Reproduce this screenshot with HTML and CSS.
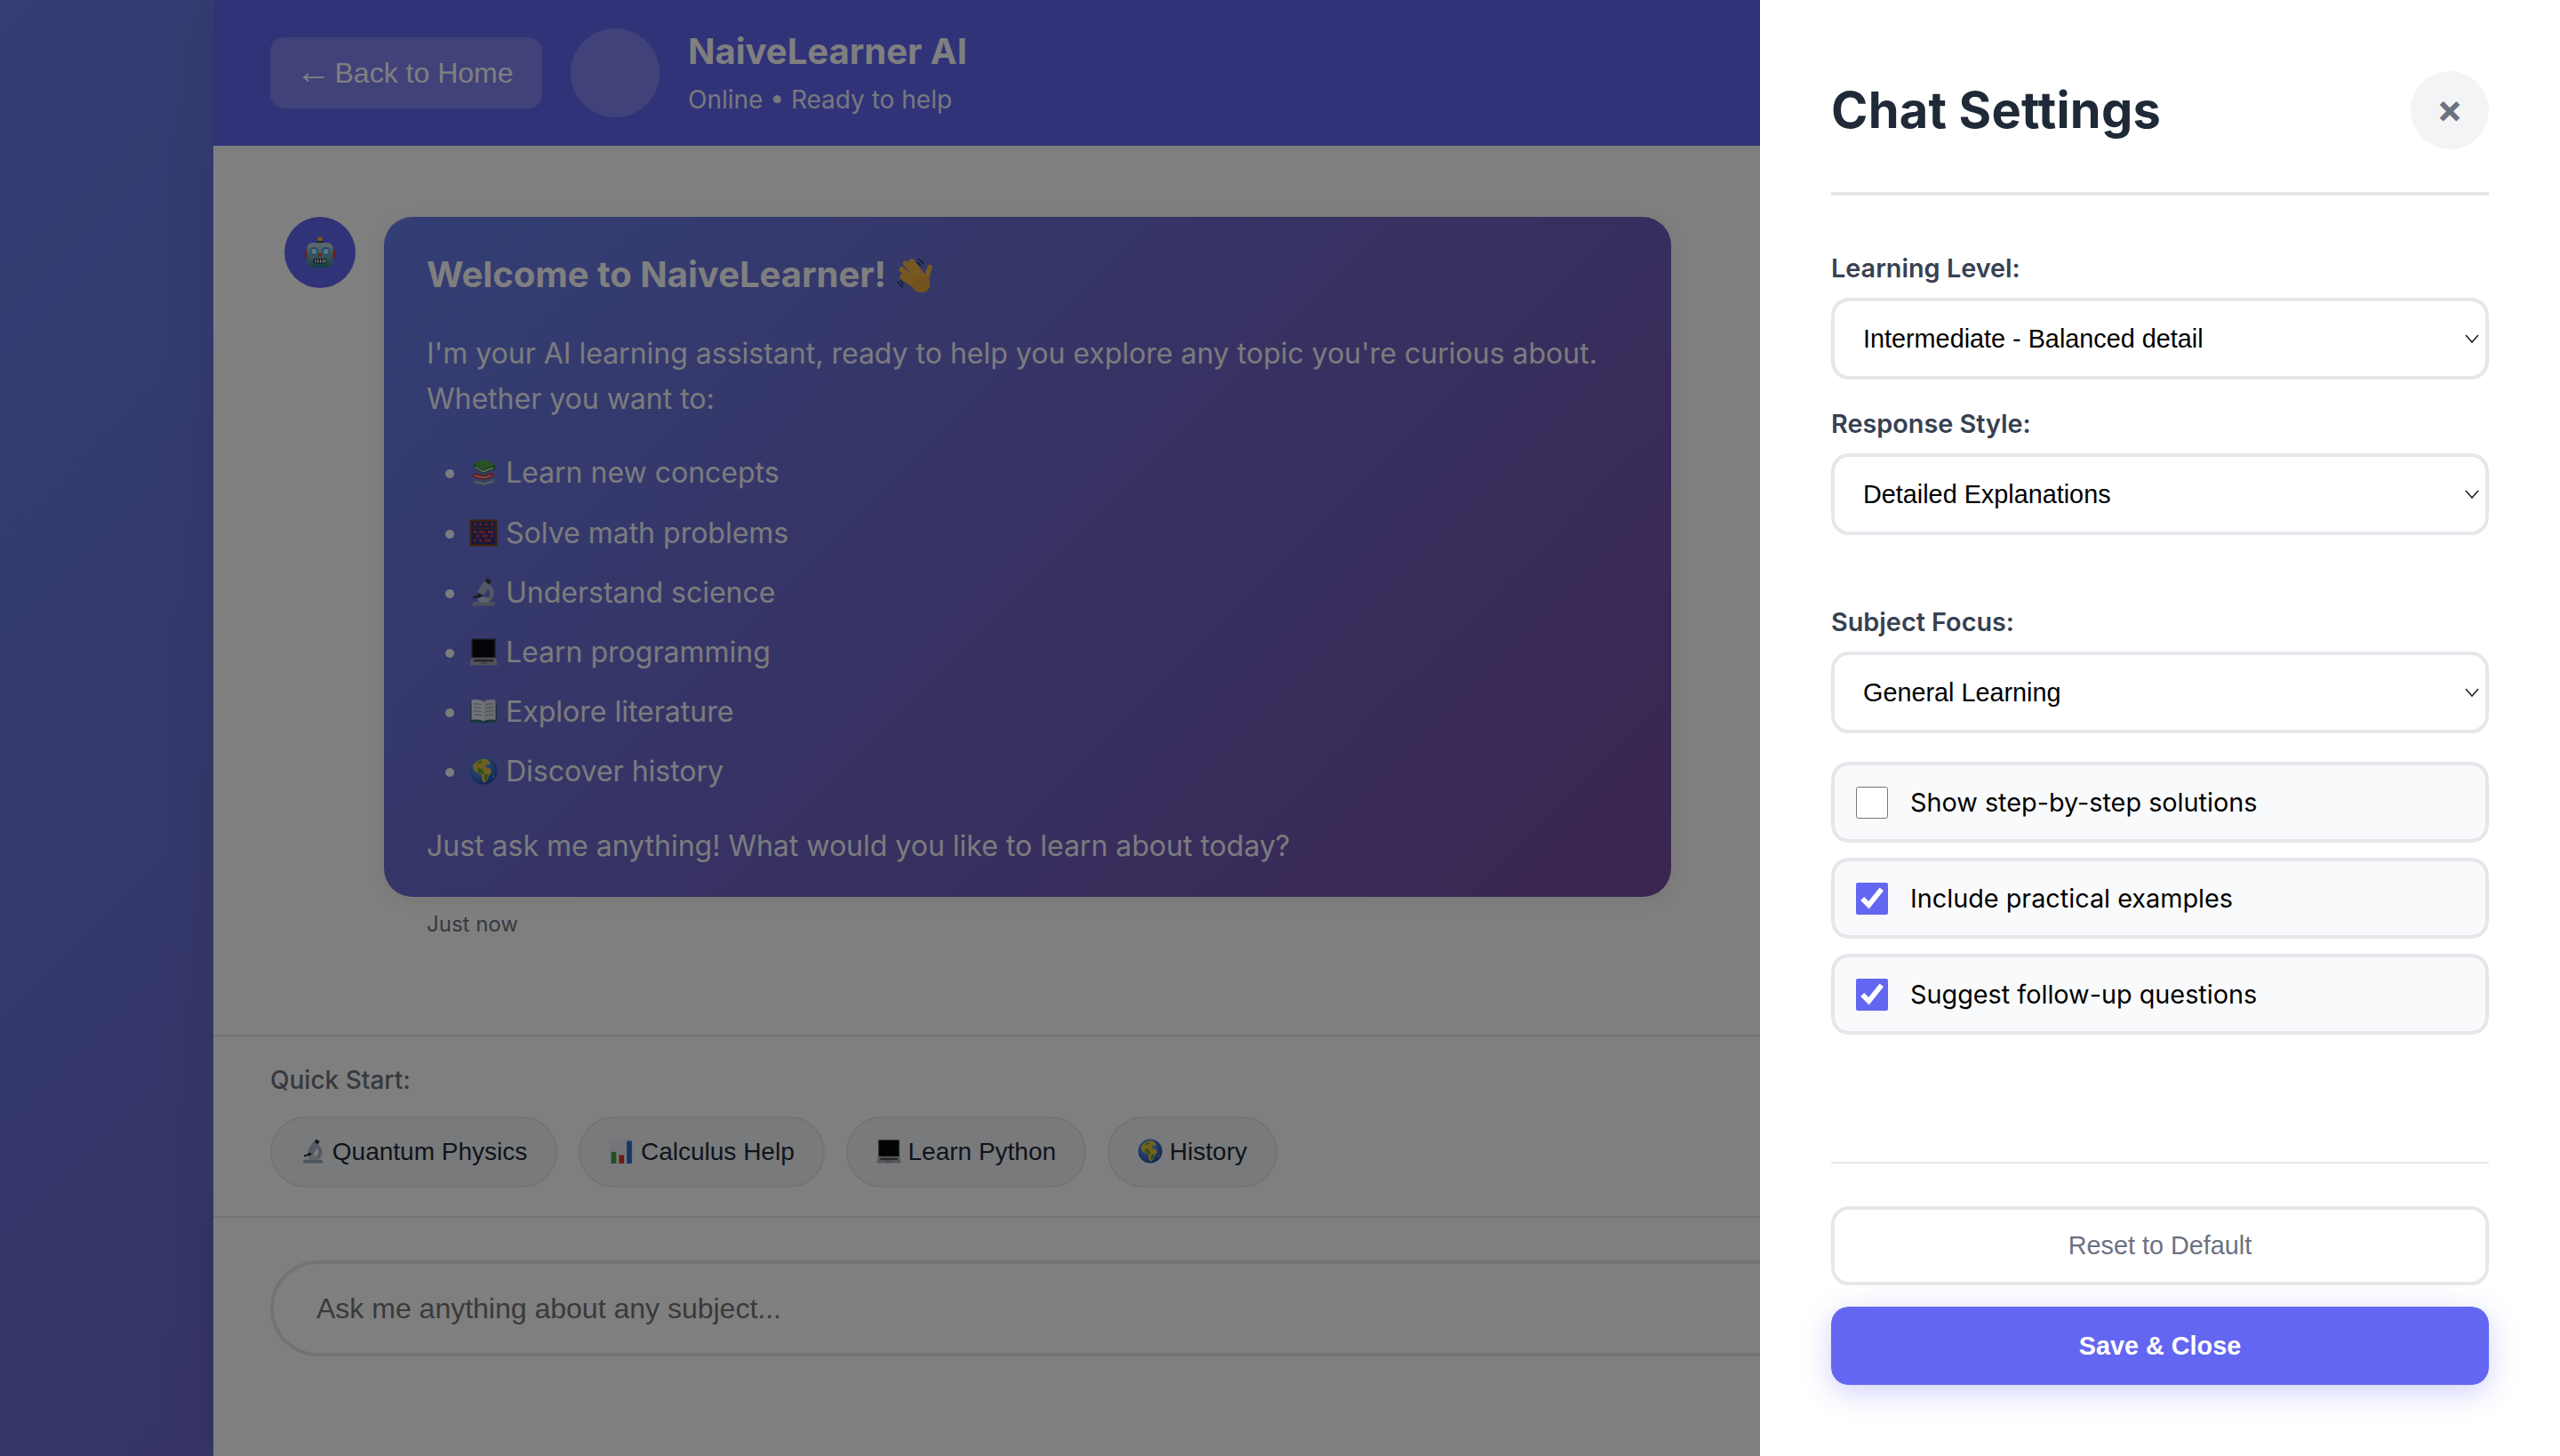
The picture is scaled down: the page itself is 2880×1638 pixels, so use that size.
FILE: index.html
```html
<!DOCTYPE html>
<html lang="en">
<head>
<meta charset="utf-8">
<title>NaiveLearner AI</title>
<link rel="stylesheet" href="styles.css">
</head>
<body>
<svg class="defs" width="0" height="0" aria-hidden="true">
  <defs>
    <linearGradient id="robotHead" x1="0" y1="0" x2="0" y2="1"><stop offset="0" stop-color="#c9d3d8"/><stop offset="1" stop-color="#2f7f8c"/></linearGradient>
    <radialGradient id="globeSea" cx=".4" cy=".35" r=".75"><stop offset="0" stop-color="#6fb4ff"/><stop offset="1" stop-color="#123f9e"/></radialGradient>
    <symbol id="e-robot" viewBox="0 0 64 64">
      <circle cx="32" cy="6" r="5" fill="#f4b32c"/><rect x="25" y="9" width="14" height="5" rx="2" fill="#3b4a78"/>
      <rect x="2" y="26" width="6" height="18" rx="3" fill="#d8352a"/><rect x="56" y="26" width="6" height="18" rx="3" fill="#d8352a"/>
      <rect x="6" y="13" width="52" height="49" rx="11" fill="url(#robotHead)"/>
      <circle cx="20" cy="30" r="7" fill="#c9e6ef" stroke="#2aa4e0" stroke-width="3.5"/><circle cx="44" cy="30" r="7" fill="#c9e6ef" stroke="#2aa4e0" stroke-width="3.5"/>
      <path d="M32 30l5 10H27z" fill="#e8403a"/>
      <rect x="19" y="45" width="26" height="9" rx="2" fill="#10252c"/><path d="M23 46v7M28 46v7M33 46v7M38 46v7M42 46v7" stroke="#fff" stroke-width="2.6"/>
    </symbol>
    <symbol id="e-wave" viewBox="0 0 64 64">
      <g fill="none" stroke="#eeb040" stroke-linecap="round">
        <path d="M27 9l19 25M17 12l23 24M11 22l25 20M12 34l20 14" stroke-width="9"/>
        <path d="M57 18l-7 22" stroke-width="8"/>
      </g>
      <path d="M30 34l25 0c4 12 2 20-5 24-6 3-14 2-20-4z" fill="#e6a436"/>
      <path d="M37 5c4 1 7 4 9 8M35 10c3 1 5 3 7 6M4 42c2 4 5 7 9 9M9 40c1 3 3 5 6 7" fill="none" stroke="#20284a" stroke-width="2"/>
    </symbol>
    <symbol id="e-books" viewBox="0 0 64 64">
      <path d="M9 13 36 3l22 13-27 11z" fill="#4fa84a"/><path d="M9 13v9l22 14 27-10v-10L31 27z" fill="#2e7d32"/><path d="M13 19l18 11 23-9v3l-23 9-18-11z" fill="#f1efe6"/>
      <path d="M8 33l24 6 22-6v10l-22 7-24-6z" fill="#d4392c"/><path d="M12 39l20 5 18-5v2l-18 5-20-5z" fill="#f1efe6"/>
      <path d="M8 47l24 6 26-7v9l-26 8-24-6z" fill="#7c8fb8"/><path d="M12 53l20 5 22-6v2l-22 6-20-5z" fill="#f1efe6"/>
    </symbol>
    <symbol id="e-abacus" viewBox="0 0 64 64">
      <rect x="1" y="3" width="62" height="60" rx="2" fill="#7a3d12"/><rect x="6" y="8" width="52" height="50" fill="#2a2f7a"/>
      <rect x="6" y="21" width="52" height="3" fill="#7a3d12"/>
      <g fill="#e03a30"><circle cx="13" cy="14" r="3.4"/><circle cx="25" cy="14" r="3.4"/><circle cx="38" cy="14" r="3.4"/><circle cx="51" cy="14" r="3.4"/><circle cx="13" cy="31" r="3.4"/><circle cx="25" cy="31" r="3.4"/><circle cx="32" cy="31" r="3.4"/><circle cx="45" cy="31" r="3.4"/><circle cx="51" cy="31" r="3.4"/><circle cx="19" cy="40" r="3.4"/><circle cx="32" cy="40" r="3.4"/><circle cx="38" cy="40" r="3.4"/><circle cx="51" cy="40" r="3.4"/><circle cx="13" cy="50" r="3.4"/><circle cx="25" cy="50" r="3.4"/><circle cx="38" cy="50" r="3.4"/><circle cx="45" cy="50" r="3.4"/></g>
    </symbol>
    <symbol id="e-microscope" viewBox="0 0 64 64">
      <path d="M10 54h44c2 0 3 2 3 4v5H7v-5c0-2 1-4 3-4z" fill="#9aa8b8"/>
      <path d="M38 17c12 4 17 18 10 28-3 4-8 7-14 7h-8" fill="none" stroke="#a9b7c6" stroke-width="9"/>
      <ellipse cx="32" cy="49" rx="13" ry="6" fill="#c3cfda"/>
      <path d="M8 42l24-6 2 4-24 7z" fill="#30363d"/>
      <g transform="rotate(32 32 22)"><rect x="25" y="8" width="17" height="30" rx="4" fill="#a6b8c9"/><rect x="28" y="0" width="11" height="9" fill="#30363d"/><rect x="30" y="38" width="7" height="8" fill="#30363d"/></g>
    </symbol>
    <symbol id="e-laptop" viewBox="0 0 64 64">
      <path d="M5 3h54v43H5z" fill="#2c2f33"/><path d="M8 6h48v38H8z" fill="#060606"/>
      <path d="M5 46h54l4 14c0 2-1 3-3 3H4c-2 0-3-1-3-3z" fill="#a9adb2"/><path d="M11 49h42l2 6H9z" fill="#50545a"/><rect x="25" y="57" width="14" height="3" fill="#7c8086"/>
    </symbol>
    <symbol id="e-openbook" viewBox="0 0 64 64">
      <path d="M2 13v43l29 3 1 1 1-1 29-3V13z" fill="#2d6a73"/>
      <path d="M5 7c10-2 21-1 27 4v44c-6-4-17-5-27-3z" fill="#eef0f3"/><path d="M59 7c-10-2-21-1-27 4v44c6-4 17-5 27-3z" fill="#dde1e6"/>
      <path d="M10 16c7-1 13 0 17 2M10 24c7-1 13 0 17 2M10 32c7-1 13 0 17 2M10 40c7-1 13 0 17 2M54 16c-7-1-13 0-17 2M54 24c-7-1-13 0-17 2M54 32c-7-1-13 0-17 2M54 40c-7-1-13 0-17 2" fill="none" stroke="#8f98a3" stroke-width="2"/>
    </symbol>
    <symbol id="e-globe" viewBox="0 0 64 64">
      <circle cx="32" cy="32" r="31" fill="url(#globeSea)"/>
      <path d="M15 13c7-6 16-9 24-7l6 5 3 8-8-2-5 3 3 6 9 1 3 8-7 9-3 9-6 6-5-4-1-11-6-7-8-2-6-9 1-8z" fill="#e7c43c"/>
      <path d="M17 28l6-3 8 6 3 8-5 2-9-6z" fill="#6da33c"/><path d="M35 41l6-1-2 11-5 4z" fill="#3f8a3c"/><path d="M18 13l8-4 4 4-8 4z" fill="#6da33c"/><path d="M53 44l4-3-3 8z" fill="#e7c43c"/>
    </symbol>
    <symbol id="e-chart" viewBox="0 0 64 64">
      <rect x="2" y="0" width="60" height="64" fill="#e8edf2"/>
      <rect x="6" y="34" width="13" height="30" fill="#43a047"/><rect x="26" y="42" width="13" height="22" fill="#d8352a"/><rect x="46" y="6" width="13" height="58" fill="#2a6fd0"/>
    </symbol>
  </defs>
</svg>

<div class="app">
  <header class="top">
    <button class="back" type="button"><span class="back-arrow">←</span><span>Back to Home</span></button>
    <div class="top-avatar"></div>
    <div class="top-text">
      <h1 class="top-title">NaiveLearner AI</h1>
      <p class="top-status">Online • Ready to help</p>
    </div>
  </header>

  <main class="messages">
    <div class="message">
      <div class="avatar"><svg class="ico-robot"><use href="#e-robot"/></svg></div>
      <div class="message-body">
        <div class="bubble">
          <h3 class="bubble-title">Welcome to NaiveLearner! <svg class="ico-wave"><use href="#e-wave"/></svg></h3>
          <p class="bubble-text">I'm your AI learning assistant, ready to help you explore any topic you're curious about. Whether you want to:</p>
          <ul class="topics">
            <li><svg class="ico"><use href="#e-books"/></svg> Learn new concepts</li>
            <li><svg class="ico"><use href="#e-abacus"/></svg> Solve math problems</li>
            <li><svg class="ico"><use href="#e-microscope"/></svg> Understand science</li>
            <li><svg class="ico"><use href="#e-laptop"/></svg> Learn programming</li>
            <li><svg class="ico"><use href="#e-openbook"/></svg> Explore literature</li>
            <li><svg class="ico"><use href="#e-globe"/></svg> Discover history</li>
          </ul>
          <p class="bubble-text">Just ask me anything! What would you like to learn about today?</p>
        </div>
        <div class="time">Just now</div>
      </div>
    </div>
  </main>

  <section class="quick">
    <div class="quick-label">Quick Start:</div>
    <div class="chips">
      <button class="chip" type="button"><svg class="ico-chip"><use href="#e-microscope"/></svg> Quantum Physics</button>
      <button class="chip" type="button"><svg class="ico-chip"><use href="#e-chart"/></svg> Calculus Help</button>
      <button class="chip" type="button"><svg class="ico-chip"><use href="#e-laptop"/></svg> Learn Python</button>
      <button class="chip" type="button"><svg class="ico-chip"><use href="#e-globe"/></svg> History</button>
    </div>
  </section>

  <section class="composer">
    <input class="composer-input" type="text" placeholder="Ask me anything about any subject...">
  </section>
</div>

<div class="overlay"></div>

<aside class="panel">
  <div class="panel-head">
    <h2 class="panel-title">Chat Settings</h2>
    <button class="close" type="button" aria-label="Close">×</button>
  </div>

  <label class="field-label">Learning Level:</label>
  <div class="select-wrap">
    <select class="select"><option>Intermediate - Balanced detail</option></select>
    <svg class="chev" viewBox="0 0 16 10"><path d="M1 1l7 8 7-8" fill="none" stroke="#222" stroke-width="1.6"/></svg>
  </div>

  <label class="field-label">Response Style:</label>
  <div class="select-wrap select-wrap-last">
    <select class="select"><option>Detailed Explanations</option></select>
    <svg class="chev" viewBox="0 0 16 10"><path d="M1 1l7 8 7-8" fill="none" stroke="#222" stroke-width="1.6"/></svg>
  </div>

  <label class="field-label">Subject Focus:</label>
  <div class="select-wrap">
    <select class="select"><option>General Learning</option></select>
    <svg class="chev" viewBox="0 0 16 10"><path d="M1 1l7 8 7-8" fill="none" stroke="#222" stroke-width="1.6"/></svg>
  </div>

  <div class="checks">
    <label class="check-row"><input class="check" type="checkbox"><span>Show step-by-step solutions</span></label>
    <label class="check-row"><input class="check" type="checkbox" checked><span>Include practical examples</span></label>
    <label class="check-row"><input class="check" type="checkbox" checked><span>Suggest follow-up questions</span></label>
  </div>

  <div class="panel-foot">
    <button class="btn-reset" type="button">Reset to Default</button>
    <button class="btn-save" type="button">Save &amp; Close</button>
  </div>
</aside>
</body>
</html>
```
FILE: styles.css
```css
* { box-sizing: border-box; }

html, body { height: 100%; }

body {
  margin: 0;
  height: 100vh;
  overflow: hidden;
  font-family: Inter, "Liberation Sans", sans-serif;
  background: linear-gradient(135deg, #667eea 0%, #764ba2 100%);
}

.defs { position: absolute; }

.app {
  width: 2400px;
  height: 100vh;
  margin: 0 auto;
  display: flex;
  flex-direction: column;
  background: #fff;
  box-shadow: 0 0 60px rgba(0, 0, 0, 0.1);
}

/* header */
.top {
  flex: none;
  height: 164px;
  padding: 32px 64px;
  display: flex;
  align-items: center;
  background: #6366f1;
  color: #fff;
}

.back {
  height: 80px;
  width: 306px;
  padding: 0;
  border: 0;
  border-radius: 16px;
  background: rgba(255, 255, 255, 0.2);
  color: #fff;
  font: 32px "Liberation Sans", sans-serif;
}

.back-arrow {
  display: inline-block;
  font-size: 40px;
  line-height: 0;
  transform: translate(-4px, 1px);
}

.top-avatar {
  width: 100px;
  height: 100px;
  margin-left: 32px;
  margin-right: 32px;
  border-radius: 50%;
  background: rgba(255, 255, 255, 0.2);
}

.top-title {
  margin: 0;
  font-size: 40px;
  line-height: 52px;
  font-weight: 700;
}

.top-status {
  margin: 8px 0 0;
  font-size: 28px;
  line-height: 40px;
  opacity: 0.9;
}

/* messages */
.messages {
  flex: 1;
  min-height: 0;
  padding: 80px;
}

.message {
  display: flex;
  gap: 32px;
  width: 1560px;
}

.avatar {
  flex: none;
  width: 80px;
  height: 80px;
  border-radius: 50%;
  background: #6366f1;
  display: flex;
  align-items: center;
  justify-content: center;
}

.ico-robot { width: 36px; height: 36px; }

.message-body { flex: 1; min-width: 0; }

.bubble {
  padding: 42px 48px 32px;
  border-radius: 32px;
  background: linear-gradient(135deg, #667eea 0%, #764ba2 100%);
  color: #fff;
  box-shadow: 0 4px 24px rgba(0, 0, 0, 0.08);
}

.bubble-title {
  margin: 0 0 40px;
  font-size: 40px;
  line-height: 46px;
  font-weight: 700;
}

.ico-wave { width: 44px; height: 44px; vertical-align: -9px; }

.bubble-text {
  margin: 0;
  font-size: 32px;
  line-height: 51.2px;
  opacity: 0.95;
}

.topics {
  margin: 32px 0;
  padding: 0 0 0 48px;
  font-size: 32px;
  line-height: 51.2px;
}

.topics li { margin-bottom: 16px; opacity: 0.95; }
.topics li:last-child { margin-bottom: 0; }

.ico { width: 32px; height: 32px; vertical-align: -4px; }

.time {
  margin: 14px 0 0 48px;
  font-size: 24px;
  line-height: 34px;
  color: #6b7280;
}

/* quick start */
.quick {
  flex: none;
  padding: 32px 64px;
  border-top: 2px solid #e5e7eb;
  border-bottom: 2px solid #e5e7eb;
}

.quick-label {
  margin-bottom: 24px;
  font-size: 28px;
  line-height: 34px;
  font-weight: 500;
  color: #6b7280;
}

.chips { display: flex; gap: 24px; }

.chip {
  height: 80px;
  padding: 0 32px;
  border: 2px solid #e5e7eb;
  border-radius: 40px;
  background: #f3f4f6;
  color: #1f2937;
  font: 28px "Liberation Sans", sans-serif;
  white-space: nowrap;
}

.ico-chip { width: 28px; height: 28px; vertical-align: -4px; }

/* composer */
.composer {
  flex: none;
  height: 268px;
  padding: 48px 64px;
}

.composer-input {
  display: block;
  width: 100%;
  height: 108px;
  padding: 0 48px;
  border: 4px solid #e5e7eb;
  border-radius: 54px;
  background: #fff;
  font: 32px "Liberation Sans", sans-serif;
  outline: none;
}

.composer-input::placeholder { color: #757575; }

/* overlay + panel */
.overlay {
  position: fixed;
  inset: 0;
  background: rgba(0, 0, 0, 0.5);
}

.panel {
  position: fixed;
  top: 0;
  right: 0;
  bottom: 0;
  width: 900px;
  padding: 80px;
  display: flex;
  flex-direction: column;
  background: #fff;
}

.panel-head {
  flex: none;
  height: 140px;
  padding-bottom: 48px;
  margin-bottom: 64px;
  border-bottom: 4px solid #e5e7eb;
  display: flex;
  align-items: center;
  justify-content: space-between;
}

.panel-title {
  margin: 0;
  font-size: 56px;
  letter-spacing: 0.2px;
  font-weight: 700;
  color: #1f2937;
}

.close {
  width: 88px;
  height: 88px;
  padding: 0 0 4px;
  border: 0;
  border-radius: 50%;
  background: #f3f4f6;
  color: #6b7280;
  font: 700 44px/1 Inter, sans-serif;
}

.field-label {
  display: block;
  margin-bottom: 15px;
  font-size: 28.8px;
  line-height: 36px;
  font-weight: 600;
  color: #374151;
}

.select-wrap {
  position: relative;
  margin-bottom: 32px;
}

.select-wrap-last { margin-bottom: 80px; }

.select {
  display: block;
  width: 100%;
  height: 92px;
  padding: 0 32px;
  border: 4px solid #e5e7eb;
  border-radius: 20px;
  background: #fff;
  color: #000;
  font: 28.8px "Liberation Sans", sans-serif;
  appearance: none;
  outline: none;
}

.chev {
  position: absolute;
  top: 41px;
  right: 11px;
  width: 16px;
  height: 10px;
}

.checks {
  display: flex;
  flex-direction: column;
  gap: 17px;
}

.check-row {
  height: 91px;
  padding: 0 24px;
  border: 4px solid #e5e7eb;
  border-radius: 20px;
  background: #f9fafb;
  display: flex;
  align-items: center;
  gap: 25px;
  font-size: 28.8px;
  color: #000;
}

.check {
  width: 36px;
  height: 36px;
  margin: 0;
  flex: none;
  accent-color: #6366f1;
}

.panel-foot {
  margin-top: auto;
  padding-top: 48px;
  border-top: 2px solid #e5e7eb;
  display: flex;
  flex-direction: column;
  gap: 24px;
}

.btn-reset {
  height: 89px;
  border: 4px solid #e5e7eb;
  border-radius: 20px;
  background: #fff;
  color: #6b7280;
  font: 28.8px "Liberation Sans", sans-serif;
}

.btn-save {
  height: 88px;
  border: 0;
  border-radius: 20px;
  background: #6366f1;
  color: #fff;
  font: 700 28.8px "Liberation Sans", sans-serif;
  box-shadow: 0 8px 32px rgba(99, 102, 241, 0.3);
}
```
